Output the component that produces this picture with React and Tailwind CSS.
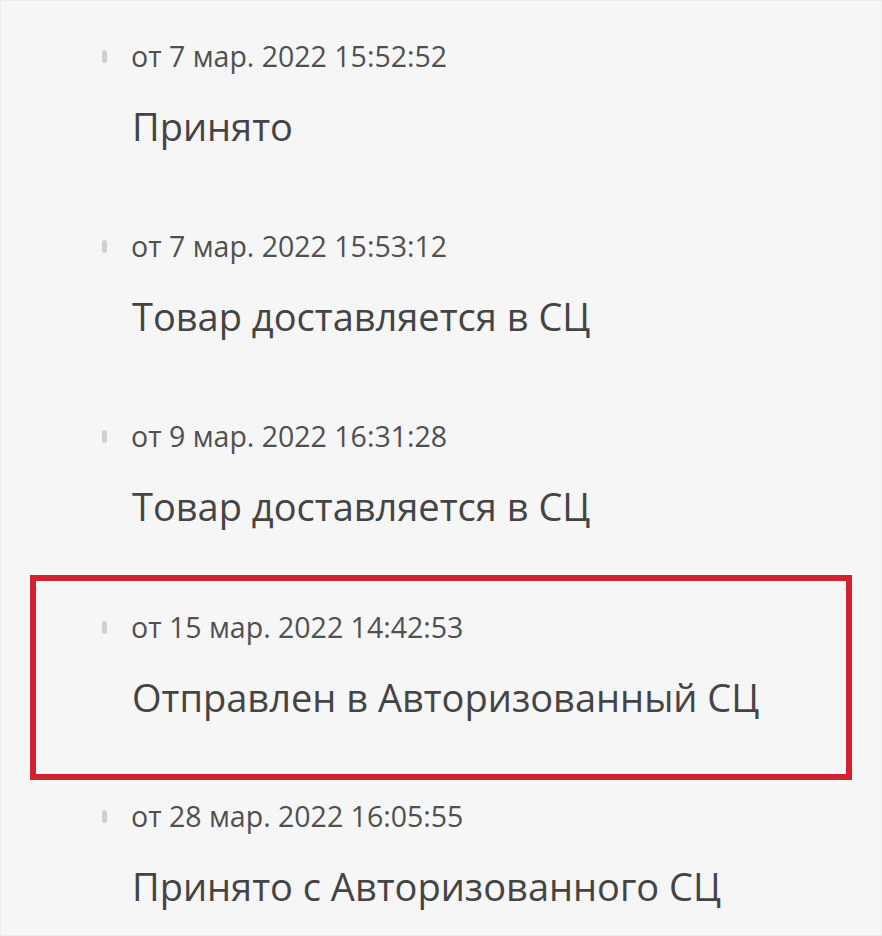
import React from "react";

const steps = [
  { date: "от 7 мар. 2022 15:52:52", title: "Принято" },
  { date: "от 7 мар. 2022 15:53:12", title: "Товар доставляется в СЦ" },
  { date: "от 9 мар. 2022 16:31:28", title: "Товар доставляется в СЦ" },
  { date: "от 15 мар. 2022 14:42:53", title: "Отправлен в Авторизованный СЦ", marked: true },
  { date: "от 28 мар. 2022 16:05:55", title: "Принято с Авторизованного СЦ" },
];

const Step = ({ step }) => {
  return (
    <div className="flex flex-col">
      <div className="flex items-center gap-[24px] h-[30px]">
        <span className="w-[5px] h-[13px] rounded-full bg-[#d0d0d0]" />
        <span className="text-[28.5px] text-[#505050]">{step.date}</span>
      </div>
      <div className="mt-[33px] h-[44px] flex items-center pl-[30px] text-[38px] text-[#444444]">
        {step.title}
      </div>
    </div>
  );
};

export default function App() {
  return (
    <div
      className="w-[882px] h-[936px] bg-[#f6f6f6] pt-[40px] border border-[#ececec]"
      style={{ fontFamily: '"Open Sans", "Noto Sans", sans-serif' }}
    >
      <div className="pl-[101px]">
        <Step step={steps[0]} />
      </div>
      <div className="pl-[101px] mt-[83px]">
        <Step step={steps[1]} />
      </div>
      <div className="pl-[101px] mt-[83px]">
        <Step step={steps[2]} />
      </div>
      <div className="ml-[29px] w-[822px] mt-[47px] border-[6px] border-[#d2222f] pl-[66px] pt-[31px] pb-[55px]">
        <Step step={steps[3]} />
      </div>
      <div className="pl-[101px] mt-[21px]">
        <Step step={steps[4]} />
      </div>
    </div>
  );
}
